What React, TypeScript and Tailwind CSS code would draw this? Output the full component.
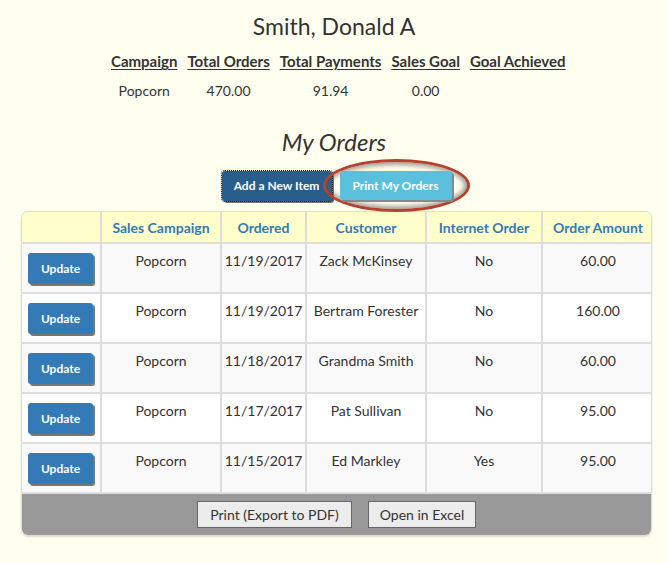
import React from "react";

const orders = [
  { date: "11/19/2017", customer: "Zack McKinsey", internet: "No", amount: "60.00" },
  { date: "11/19/2017", customer: "Bertram Forester", internet: "No", amount: "160.00" },
  { date: "11/18/2017", customer: "Grandma Smith", internet: "No", amount: "60.00" },
  { date: "11/17/2017", customer: "Pat Sullivan", internet: "No", amount: "95.00" },
  { date: "11/15/2017", customer: "Ed Markley", internet: "Yes", amount: "95.00" },
];

const App = () => {
  return (
    <div className="min-h-[563px] w-[668px] bg-[#fffff0] text-[#333] font-['Lato','Liberation_Sans',sans-serif]">
      <h1 className="pt-[12px] text-center text-[23px] leading-[28px] text-[#333]">Smith, Donald A</h1>

      <table className="mt-[12px] ml-[101px] border-separate border-spacing-x-[10px] whitespace-nowrap text-[14px]">
        <thead>
          <tr className="text-[15px] font-bold leading-[18px]">
            <th className="underline underline-offset-2">Campaign</th>
            <th className="underline underline-offset-2">Total Orders</th>
            <th className="underline underline-offset-2">Total Payments</th>
            <th className="underline underline-offset-2">Sales Goal</th>
            <th className="underline underline-offset-2">Goal Achieved</th>
          </tr>
        </thead>
        <tbody>
          <tr className="text-center">
            <td className="pt-[10px]">Popcorn</td>
            <td className="pt-[10px]">470.00</td>
            <td className="pt-[10px]">91.94</td>
            <td className="pt-[10px]">0.00</td>
            <td className="pt-[10px]"></td>
          </tr>
        </tbody>
      </table>

      <h2 className="mt-[26px] text-center text-[24px] italic leading-[30px] text-[#333]">My Orders</h2>

      <div className="mt-[14px] flex justify-center gap-[8px] pl-[5px]">
        <button className="h-[30px] w-[110px] rounded-[3px] bg-[#295d8c] text-[12px] font-bold text-white outline-1 outline-dotted outline-black shadow-[2px_2px_0_#777]">
          Add a New Item
        </button>
        <span className="relative">
          <span className="absolute -left-[17px] -right-[18px] -top-[12px] -bottom-[11px] rounded-[50%] border-[3px] border-[#b8402e] shadow-[inset_0_0_4px_3px_rgba(90,90,90,0.55)]"></span>
          <button className="relative h-[29px] w-[112px] rounded-[3px] bg-[#5bc0de] text-[12px] font-bold text-white shadow-[2px_2px_0_#888]">
            Print My Orders
          </button>
        </span>
      </div>

      <div className="mx-[21px] mt-[10px] w-[631px] overflow-hidden rounded-[7px] border border-[#ddd] shadow-[0_1px_2px_rgba(0,0,0,0.15)]">
        <table className="w-full table-fixed border-collapse text-[14px]">
          <colgroup>
            <col className="w-[79px]" />
            <col className="w-[120px]" />
            <col className="w-[85px]" />
            <col className="w-[120px]" />
            <col className="w-[116px]" />
            <col className="w-[111px]" />
          </colgroup>
          <thead>
            <tr className="h-[31px] bg-[#ffffcc] text-[14px] font-bold text-[#337ab7]">
              <th className="border-r-2 border-b-2 border-[#ddd]"></th>
              <th className="border-r-2 border-b-2 border-[#ddd]">Sales Campaign</th>
              <th className="border-r-2 border-b-2 border-[#ddd]">Ordered</th>
              <th className="border-r-2 border-b-2 border-[#ddd]">Customer</th>
              <th className="border-r-2 border-b-2 border-[#ddd]">Internet Order</th>
              <th className="border-b-2 border-[#ddd]">Order Amount</th>
            </tr>
          </thead>
          <tbody>
            {orders.map((o, i) => (
              <tr key={i} className={`h-[50px] text-center align-top ${i % 2 === 0 ? "bg-[#f9f9f9]" : "bg-white"}`}>
                <td className="border-r-2 border-b-2 border-[#ddd] pt-[9px] text-left">
                  <button className="ml-[6px] h-[31px] w-[65px] rounded-[3px] bg-[#337ab7] text-[12px] font-bold text-white shadow-[2px_2px_0_#777]">
                    Update
                  </button>
                </td>
                <td className="border-r-2 border-b-2 border-[#ddd] pt-[6px]">Popcorn</td>
                <td className="border-r-2 border-b-2 border-[#ddd] pt-[6px]">{o.date}</td>
                <td className="border-r-2 border-b-2 border-[#ddd] pt-[6px]">{o.customer}</td>
                <td className="border-r-2 border-b-2 border-[#ddd] pt-[6px]">{o.internet}</td>
                <td className="border-b-2 border-[#ddd] pt-[6px]">{o.amount}</td>
              </tr>
            ))}
          </tbody>
        </table>
        <div className="flex h-[41px] items-center justify-center gap-[16px] bg-[#999]">
          <button className="h-[27px] w-[155px] border border-[#666] bg-[#ececec] text-[14px] text-[#333]">
            Print (Export to PDF)
          </button>
          <button className="h-[27px] w-[108px] border border-[#666] bg-[#ececec] text-[14px] text-[#333]">
            Open in Excel
          </button>
        </div>
      </div>
    </div>
  );
};

export default App;
